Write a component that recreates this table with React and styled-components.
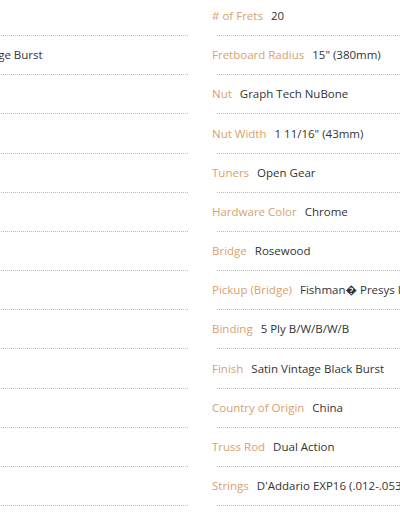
import React from "react";
import styled, { createGlobalStyle } from "styled-components";

const leftSpecs = [
  { label: "Body", value: "Dreadnought" },
  { label: "Finish", value: "Satin Vintage Orange Burst" },
  { label: "Top", value: "Solid Spruce" },
  { label: "Back", value: "Okoume" },
  { label: "Sides", value: "Okoume" },
  { label: "Neck", value: "Okoume" },
  { label: "Neck Shape", value: "C" },
  { label: "Fingerboard", value: "Pau Ferro" },
  { label: "Scale", value: '25.5"' },
  { label: "Bracing", value: "X" },
  { label: "Inlays", value: "Dot" },
  { label: "Pickguard", value: "Black" },
  { label: "Case", value: "Gig Bag" },
];

const rightSpecs = [
  { label: "# of Frets", value: "20" },
  { label: "Fretboard Radius", value: '15" (380mm)' },
  { label: "Nut", value: "Graph Tech NuBone" },
  { label: "Nut Width", value: '1 11/16" (43mm)' },
  { label: "Tuners", value: "Open Gear" },
  { label: "Hardware Color", value: "Chrome" },
  { label: "Bridge", value: "Rosewood" },
  { label: "Pickup (Bridge)", value: "Fishman\uFFFD Presys II" },
  { label: "Binding", value: "5 Ply B/W/B/W/B" },
  { label: "Finish", value: "Satin Vintage Black Burst" },
  { label: "Country of Origin", value: "China" },
  { label: "Truss Rod", value: "Dual Action" },
  { label: "Strings", value: "D'Addario EXP16 (.012-.053)" },
];

const GlobalStyle = createGlobalStyle`
  html, body {
    margin: 0;
    padding: 0;
    background: #ffffff;
    overflow: hidden;
  }
`;

const Page = styled.div`
  width: 400px;
  height: 516px;
  overflow: hidden;
`;

const Columns = styled.div`
  display: grid;
  grid-template-columns: 329px 300px;
  column-gap: 24px;
  margin: -3px 0 0 -141px;
  width: 653px;
`;

const SpecList = styled.ul`
  list-style: none;
  margin: 0;
  padding: 0;
`;

const SpecRow = styled.li`
  padding-top: 9.17px;
  font-family: "Open Sans", "Noto Sans", sans-serif;
  font-size: 11.5px;
  line-height: 20px;
  white-space: nowrap;

  &::after {
    content: "";
    display: block;
    margin: 9px 0 0 5px;
    border-bottom: 1px dotted #bdbdbd;
  }
`;

const Label = styled.span`
  color: #d9a16d;
  margin-right: 8px;
`;

const Value = styled.span`
  color: #333333;
`;

const Column = ({ specs }) => (
  <SpecList>
    {specs.map((spec) => (
      <SpecRow key={spec.label}>
        <Label>{spec.label}</Label>
        <Value>{spec.value}</Value>
      </SpecRow>
    ))}
  </SpecList>
);

const App = () => {
  return (
    <>
      <GlobalStyle />
      <Page>
        <Columns>
          <Column specs={leftSpecs} />
          <Column specs={rightSpecs} />
        </Columns>
      </Page>
    </>
  );
};

export default App;
